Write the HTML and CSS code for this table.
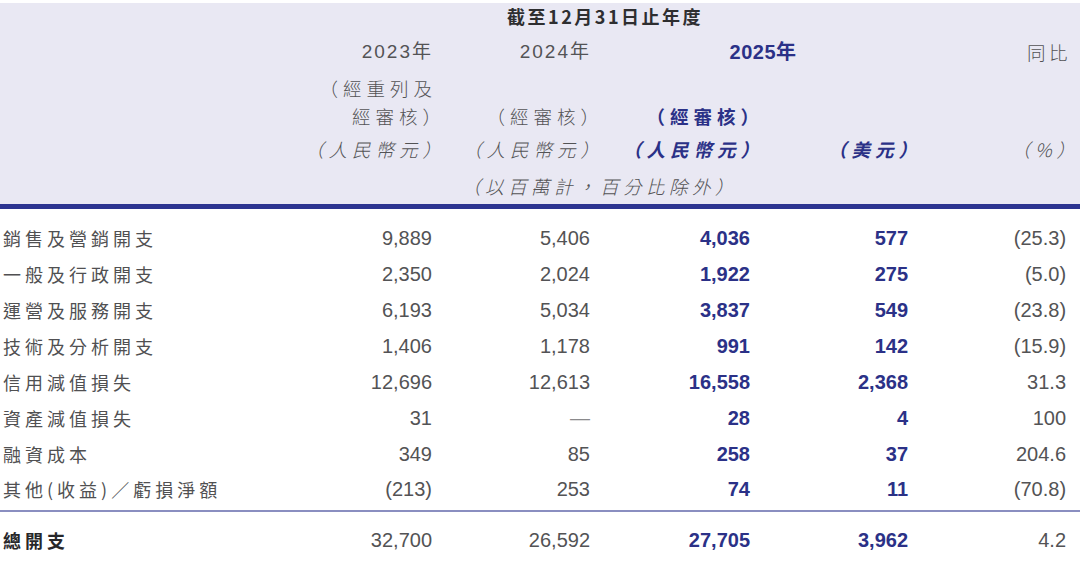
FILE: index.html
```html
<!DOCTYPE html>
<html lang="zh-Hant">
<head>
<meta charset="utf-8">
<title>開支</title>
<link rel="stylesheet" href="styles.css">
</head>
<body>
<div class="wrap">
<table class="fin">
  <colgroup>
    <col class="c-label"><col class="c-val"><col class="c-val"><col class="c-val2"><col class="c-val"><col class="c-val">
  </colgroup>
  <thead>
    <tr class="h1">
      <th></th><th colspan="4" class="title">截至12月31日止年度</th><th></th>
    </tr>
    <tr class="h2">
      <th></th><th class="yr">2023年</th><th class="yr">2024年</th><th colspan="2" class="yr hl center">2025年</th><th class="cjk yoy">同比</th>
    </tr>
    <tr class="h3">
      <th></th><th class="cjk pr"><span class="open-line">（經重列及</span><br>經審核）</th><th class="cjk pr">（經審核）</th><th class="cjk pr hl">（經審核）</th><th></th><th></th>
    </tr>
    <tr class="h4">
      <th></th><th class="cjk pr it">（人民幣元）</th><th class="cjk pr it">（人民幣元）</th><th class="cjk pr it hl">（人民幣元）</th><th class="cjk pr it hl">（美元）</th><th class="cjk pr it">（%）</th>
    </tr>
    <tr class="h5">
      <th></th><th colspan="4" class="cjk it center">（以百萬計，百分比除外）</th><th></th>
    </tr>
  </thead>
  <tbody>
    <tr><td class="label">銷售及營銷開支</td><td>9,889</td><td>5,406</td><td class="hl">4,036</td><td class="hl">577</td><td>(25.3)</td></tr>
    <tr><td class="label">一般及行政開支</td><td>2,350</td><td>2,024</td><td class="hl">1,922</td><td class="hl">275</td><td>(5.0)</td></tr>
    <tr><td class="label">運營及服務開支</td><td>6,193</td><td>5,034</td><td class="hl">3,837</td><td class="hl">549</td><td>(23.8)</td></tr>
    <tr><td class="label">技術及分析開支</td><td>1,406</td><td>1,178</td><td class="hl">991</td><td class="hl">142</td><td>(15.9)</td></tr>
    <tr><td class="label">信用減值損失</td><td>12,696</td><td>12,613</td><td class="hl">16,558</td><td class="hl">2,368</td><td>31.3</td></tr>
    <tr><td class="label">資產減值損失</td><td>31</td><td class="dash">—</td><td class="hl">28</td><td class="hl">4</td><td>100</td></tr>
    <tr><td class="label">融資成本</td><td>349</td><td>85</td><td class="hl">258</td><td class="hl">37</td><td>204.6</td></tr>
    <tr class="last"><td class="label">其他(收益)／虧損淨額</td><td>(213)</td><td>253</td><td class="hl">74</td><td class="hl">11</td><td>(70.8)</td></tr>
  </tbody>
  <tfoot>
    <tr><td class="label total">總開支</td><td>32,700</td><td>26,592</td><td class="hl">27,705</td><td class="hl">3,962</td><td>4.2</td></tr>
  </tfoot>
</table>
</div>
</body>
</html>
```
FILE: styles.css
```css
html, body {
  margin: 0;
  padding: 0;
  background: #ffffff;
}
body {
  font-family: "Liberation Sans", "Noto Sans CJK TC", sans-serif;
  color: #535355;
  width: 1080px;
  height: 567px;
  overflow: hidden;
}
.wrap {
  padding-top: 3px;
}
.fin {
  width: 1080px;
  border-collapse: separate;
  border-spacing: 0;
  table-layout: fixed;
}
.c-label { width: 288px; }
.c-val { width: 158px; }
.c-val2 { width: 160px; }

/* header */
.fin thead th {
  background: #e9e8f3;
  font-weight: normal;
  text-align: right;
  padding: 0 14px 0 0;
  white-space: nowrap;
  color: #535355;
  font-size: 18px;
}
.fin thead tr.h1 th { height: 26px; line-height: 26px; vertical-align: middle; }
.fin thead tr.h2 th { height: 45px; line-height: 30px; vertical-align: middle; }
.fin thead tr.h3 th { height: 56px; line-height: 28px; vertical-align: bottom; padding-bottom: 3px; }
.fin thead tr.h4 th { height: 32px; line-height: 30px; vertical-align: middle; }
.fin thead tr.h5 th {
  height: 37px;
  padding-top: 2px;
  line-height: 30px;
  vertical-align: middle;
  border-bottom: 5px solid #2c3490;
}
.fin thead th.title {
  text-align: center;
  padding: 0;
  font-weight: bold;
  color: #2e2e30;
  letter-spacing: 2.5px;
  font-family: "Noto Sans CJK TC", "Liberation Sans", sans-serif;
}
.fin thead th.yr {
  font-size: 19px;
  letter-spacing: 2px;
  padding-right: 13px;
}
.fin thead th.yr.hl {
  letter-spacing: 0.5px;
  font-size: 20px;
  font-weight: bold;
}
.fin thead th.center {
  text-align: center;
  padding-left: 0;
  padding-right: 0;
}
.fin thead th.cjk {
  font-family: "Noto Sans CJK TC", sans-serif;
  font-size: 18.5px;
  letter-spacing: 5px;
  font-weight: 300;
}
.fin thead th.yoy {
  letter-spacing: 3.5px;
  padding-right: 9px;
}
.fin thead th.pr { padding-right: 0; }
.open-line { padding-right: 9px; }
.fin thead th.it { font-style: italic; }
.fin thead th.hl { color: #2b3187; font-weight: bold; }
.fin thead th.center.it { padding-right: 10px; letter-spacing: 4.5px; }

/* body */
.fin td {
  text-align: right;
  padding: 0 14px 0 0;
  height: 36px;
  line-height: 36px;
  font-size: 20px;
  color: #535355;
  white-space: nowrap;
}
.fin tbody tr:first-child td { padding-top: 11px; }
.fin tbody tr.last td {
  border-bottom: 2px solid #8a8ec0;
  height: 38px;
  line-height: 34px;
  vertical-align: top;
}
.fin tfoot td { height: 48px; line-height: 40px; vertical-align: bottom; padding-bottom: 0; }
.fin td.label {
  text-align: left;
  padding: 0 0 0 3px;
  font-family: "Noto Sans CJK TC", sans-serif;
  font-size: 18px;
  letter-spacing: 4px;
  color: #505052;
}
.fin tbody tr:first-child td.label { padding-top: 11px; }
.fin td.total {
  font-weight: bold;
  color: #27272a;
}
.fin td.hl {
  color: #2b3187;
  font-weight: bold;
}
.fin td.dash {
  color: #8a8a8c;
}
```
